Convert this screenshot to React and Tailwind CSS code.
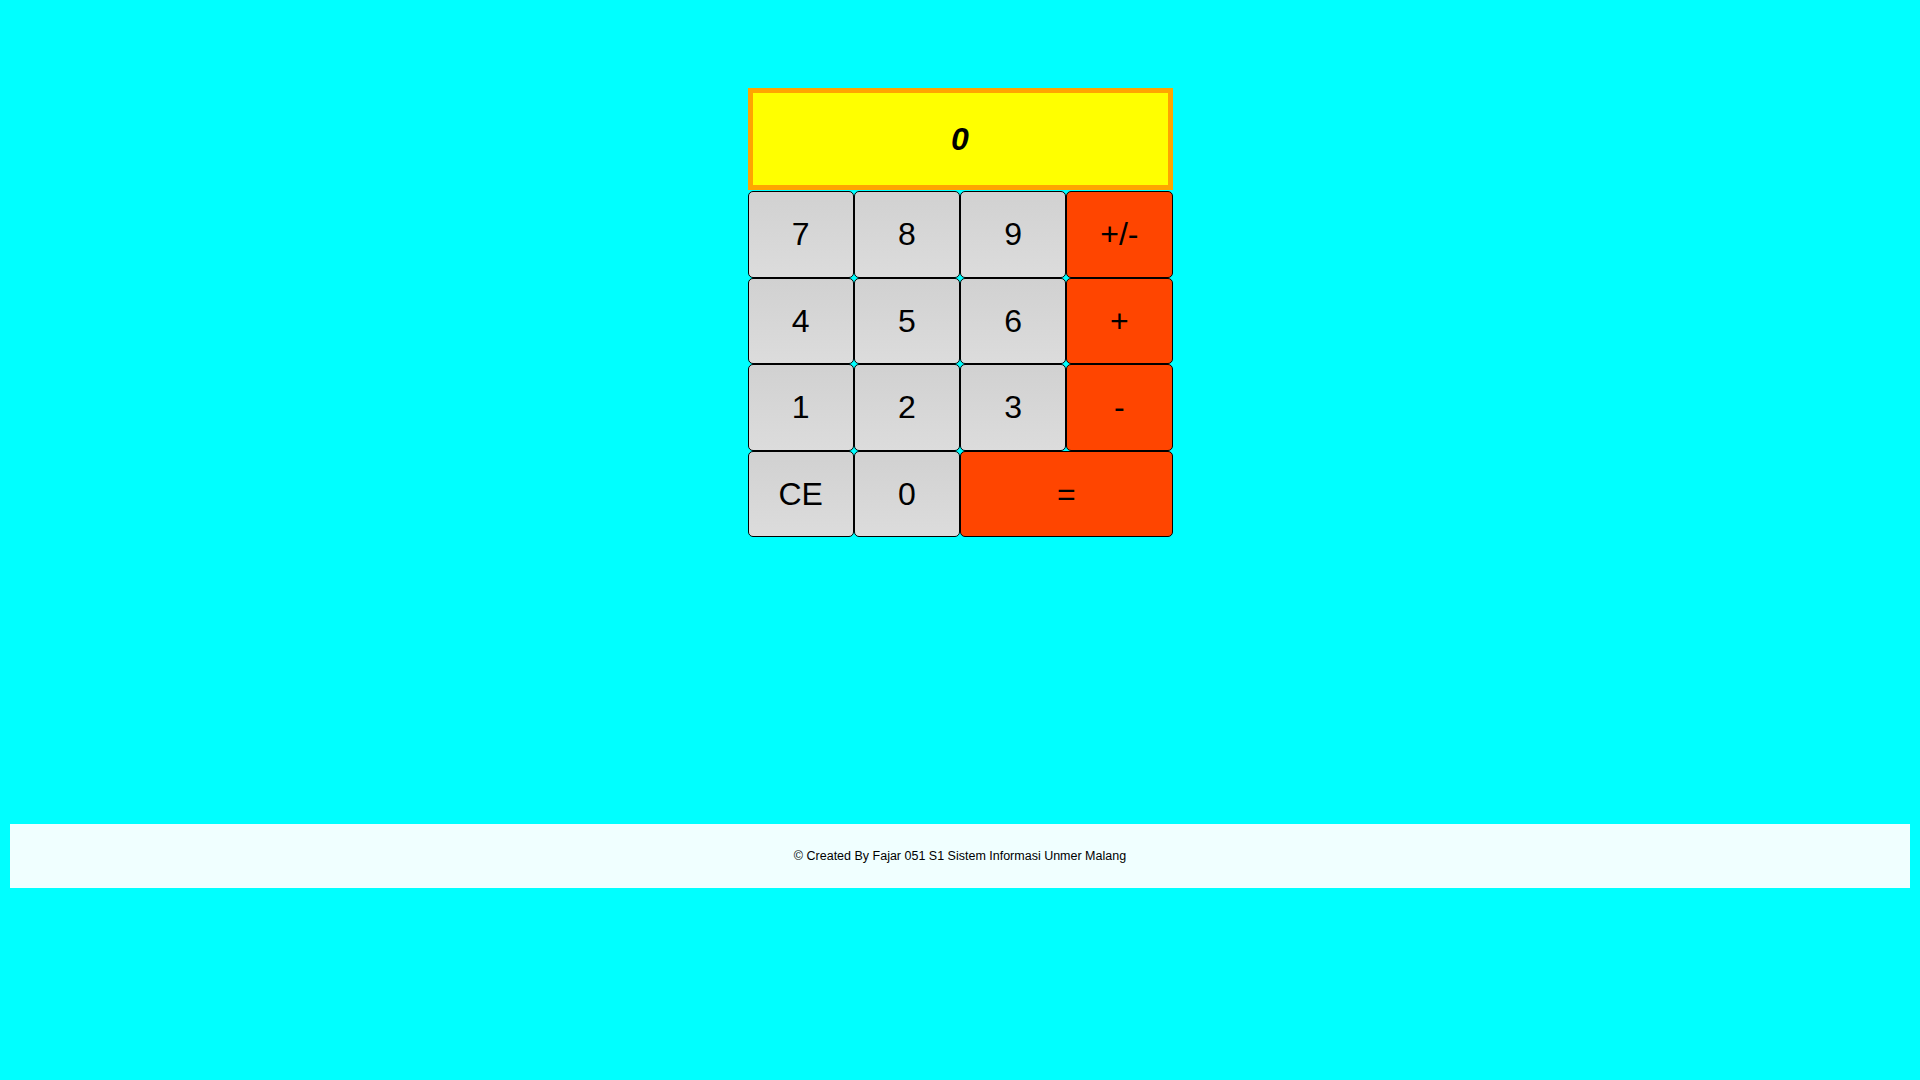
export default function App() {
  const btn =
    "flex items-center justify-center border border-black rounded-[5px] text-[32px] text-black";
  const gray = btn + " bg-gradient-to-b from-[#d1d1d1] to-[#dcdcdc]";
  const red = btn + " bg-[#ff4500]";
  return (
    <div
      className="min-h-[1080px] w-full bg-[#00ffff] px-[10px] pt-[88px]"
      style={{ fontFamily: '"Liberation Sans", Arial, sans-serif' }}
    >
      <div className="mx-auto w-[425px]">
        <div className="flex h-[102px] items-center justify-center border-[5px] border-[#ffa500] bg-[#ffff00] text-[32px] font-bold italic text-black">
          0
        </div>
        <div className="mt-px grid grid-cols-4 grid-rows-[repeat(4,86.5px)]">
          <div className={gray}>7</div>
          <div className={gray}>8</div>
          <div className={gray}>9</div>
          <div className={red}>+/-</div>
          <div className={gray}>4</div>
          <div className={gray}>5</div>
          <div className={gray}>6</div>
          <div className={red}>+</div>
          <div className={gray}>1</div>
          <div className={gray}>2</div>
          <div className={gray}>3</div>
          <div className={red}>-</div>
          <div className={gray}>CE</div>
          <div className={gray}>0</div>
          <div className={red + " col-span-2"}>=</div>
        </div>
      </div>
      <div className="mt-[287px] flex h-[64px] items-center justify-center bg-[#f0ffff] text-[12.5px] text-black">
        © Created By Fajar 051 S1 Sistem Informasi Unmer Malang
      </div>
    </div>
  );
}
